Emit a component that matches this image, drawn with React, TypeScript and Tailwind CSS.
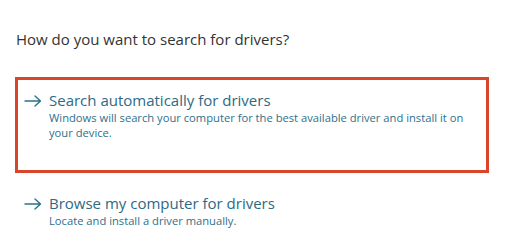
const font = { fontFamily: '"Open Sans", "Noto Sans", sans-serif' };

function Arrow() {
  return (
    <svg width="18" height="12" viewBox="0 0 18 12" fill="none" className="shrink-0">
      <path d="M1 6h15.5M11 1l5.5 5-5.5 5" stroke="#2a7389" strokeWidth="1.4" strokeLinecap="round" strokeLinejoin="round" />
    </svg>
  );
}

function Option({ title, desc }: { title: string; desc: React.ReactNode }) {
  return (
    <div className="flex gap-[7px]">
      <div className="h-5 flex items-center pt-[2px]">
        <Arrow />
      </div>
      <div>
        <div className="text-[15px] leading-5 text-[#2c6a85]">{title}</div>
        <div className="text-[11.2px] leading-[15px] text-[#2f6f8c]">{desc}</div>
      </div>
    </div>
  );
}

export default function App() {
  return (
    <div className="w-[513px] h-[252px] bg-white overflow-hidden" style={font}>
      <div className="pt-[29px] pl-4 text-[15px] leading-5 text-[#333333]">
        How do you want to search for drivers?
      </div>
      <div className="mt-[28px] ml-[15px] w-[474px] h-[96px] border-[3px] border-[#d9452b] pt-[10px] pl-[6px] pr-3">
        <Option
          title="Search automatically for drivers"
          desc="Windows will search your computer for the best available driver and install it on your device."
        />
      </div>
      <div className="mt-[20px] pl-[24px]">
        <Option title="Browse my computer for drivers" desc="Locate and install a driver manually." />
      </div>
    </div>
  );
}
